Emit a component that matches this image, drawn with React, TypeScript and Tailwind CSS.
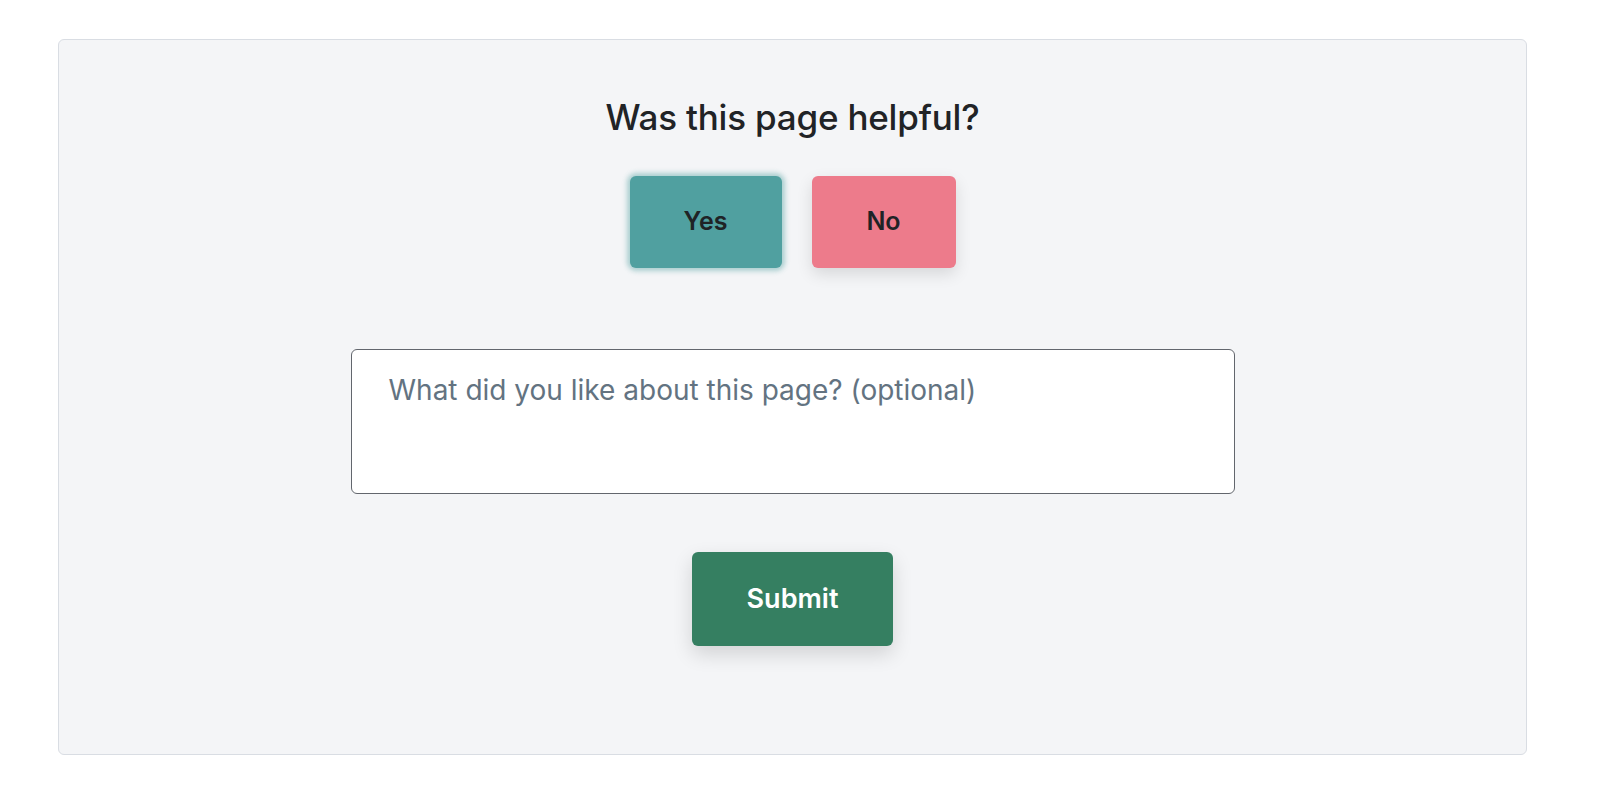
import { useState } from 'react'

export default function App() {
  const [vote, setVote] = useState<'yes' | 'no' | null>('yes')
  const [text, setText] = useState('')

  return (
    <div className="min-h-screen bg-white font-['Inter','Liberation_Sans',sans-serif] text-[#212326]">
      <div className="w-[1585px] px-[58px] pt-[39px]">
        <div className="rounded-md border border-[#d9dde3] bg-[#f4f5f7] pt-[57px] pb-[108px] flex flex-col items-center">
          <h2 className="text-[35px] leading-[40px] font-medium tracking-[-0.2px]">
            Was this page helpful?
          </h2>

          <div className="mt-[39px] flex gap-[30px]">
            <button
              onClick={() => setVote('yes')}
              className={
                'h-[92px] w-[152px] rounded-md bg-[#50a0a0] text-[25px] font-semibold text-[#1f2326] ' +
                (vote === 'yes'
                  ? 'shadow-[0_0_5px_3px_rgba(80,160,160,0.45)]'
                  : 'shadow-[0_6px_16px_rgba(0,0,0,0.12)]')
              }
            >
              Yes
            </button>
            <button
              onClick={() => setVote('no')}
              className={
                'h-[92px] w-[144px] rounded-md bg-[#ed7b8b] text-[25px] font-semibold text-[#1f2326] ' +
                (vote === 'no'
                  ? 'shadow-[0_0_5px_3px_rgba(237,123,139,0.45)]'
                  : 'shadow-[0_6px_16px_rgba(0,0,0,0.12)]')
              }
            >
              No
            </button>
          </div>

          <textarea
            value={text}
            onChange={(e) => setText(e.target.value)}
            placeholder="What did you like about this page? (optional)"
            className="mt-[81px] h-[145px] w-[884px] resize-none rounded-md border border-[#62666d] bg-white px-[37px] py-[22px] text-[28px] leading-[36px] text-[#212326] outline-none placeholder:text-[#637381]"
          />

          <button className="mt-[58px] h-[94px] w-[201px] rounded-md bg-[#357f61] text-[27px] font-semibold text-white shadow-[0_8px_20px_rgba(0,0,0,0.14)]">
            Submit
          </button>
        </div>
      </div>
    </div>
  )
}
